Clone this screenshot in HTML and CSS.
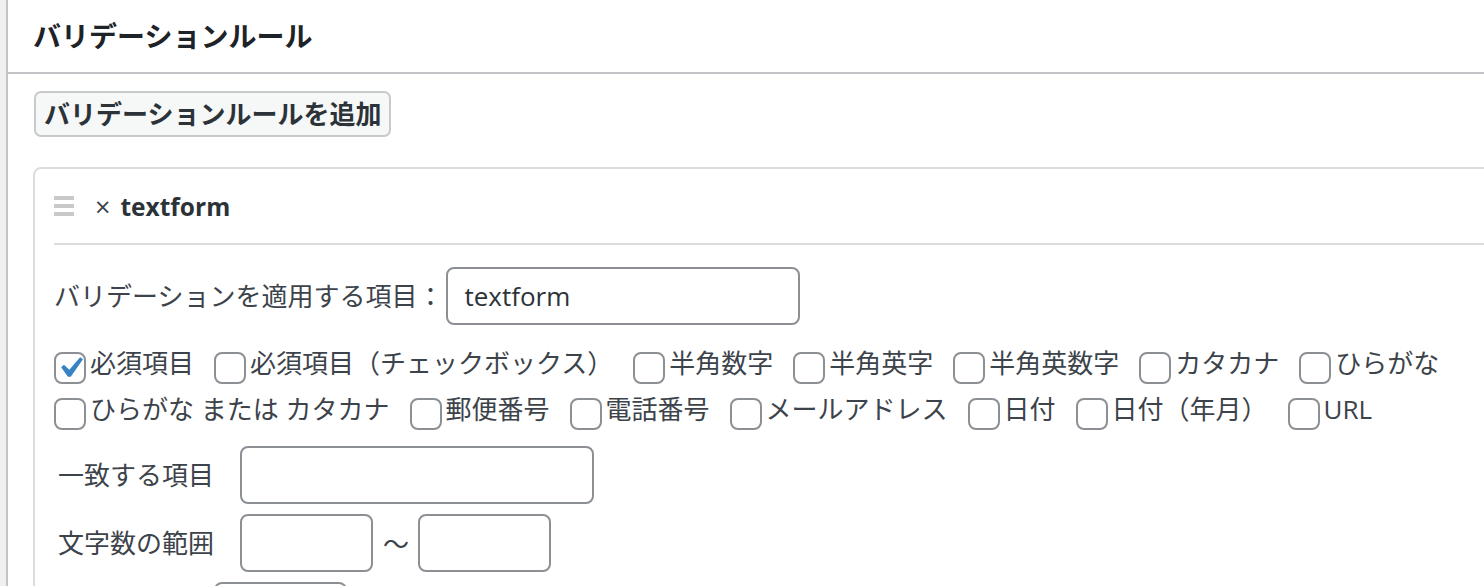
FILE: index.html
```html
<!DOCTYPE html>
<html lang="ja">
<head>
    <meta charset="UTF-8">
    <meta name="viewport" content="width=device-width, initial-scale=1.0">
    <title>バリデーションルール</title>
    <link rel="stylesheet" href="styles.css">
</head>
<body>

    <div class="screen">
        <div class="postbox">
            <h2 class="postbox-title">バリデーションルール</h2>

            <div class="inside">
                <button type="button" class="button">バリデーションルールを追加</button>

                <div class="rule">
                    <div class="rule-head">
                        <span class="handle"></span>
                        <span class="remove">×</span>
                        <span class="rule-name">textform</span>
                    </div>

                    <div class="rule-body">
                        <div class="target">
                            <label class="target-label">バリデーションを適用する項目：</label>
                            <input type="text" class="text target-input" value="textform">
                        </div>

                        <div class="checks">
                            <label class="check">
                                <span class="box checked">
                                    <svg viewBox="0 0 20 20" width="42" height="42"><path d="M14.83 4.89l1.34.94-5.81 8.38H9.02L5.78 9.67l1.34-1.25 2.57 2.4z"/></svg>
                                </span>
                                <span class="check-text">必須項目</span>
                            </label>
                            <label class="check"><span class="box"></span><span class="check-text">必須項目（チェックボックス）</span></label>
                            <label class="check"><span class="box"></span><span class="check-text">半角数字</span></label>
                            <label class="check"><span class="box"></span><span class="check-text">半角英字</span></label>
                            <label class="check"><span class="box"></span><span class="check-text">半角英数字</span></label>
                            <label class="check"><span class="box"></span><span class="check-text">カタカナ</span></label>
                            <label class="check"><span class="box"></span><span class="check-text">ひらがな</span></label>
                            <label class="check"><span class="box"></span><span class="check-text">ひらがな または カタカナ</span></label>
                            <label class="check"><span class="box"></span><span class="check-text">郵便番号</span></label>
                            <label class="check"><span class="box"></span><span class="check-text">電話番号</span></label>
                            <label class="check"><span class="box"></span><span class="check-text">メールアドレス</span></label>
                            <label class="check"><span class="box"></span><span class="check-text">日付</span></label>
                            <label class="check"><span class="box"></span><span class="check-text">日付（年月）</span></label>
                            <label class="check"><span class="box"></span><span class="check-text">URL</span></label>
                        </div>

                        <div class="field">
                            <span class="field-label">一致する項目</span>
                            <input type="text" class="text wide">
                        </div>
                        <div class="field">
                            <span class="field-label">文字数の範囲</span>
                            <input type="text" class="text short">
                            <span class="tilde">〜</span>
                            <input type="text" class="text short">
                        </div>
                        <div class="field">
                            <span class="field-label">最小文字数</span>
                            <input type="text" class="text short">
                        </div>
                    </div>
                </div>
            </div>
        </div>
    </div>

</body>
</html>
```

FILE: styles.css
```css
* {
    margin: 0;
    padding: 0;
    box-sizing: border-box;
}

html, body {
    height: 100%;
}

body {
    font-family: "Open Sans", "Noto Sans CJK JP", sans-serif;
    background: #f0f0f1;
    color: #3c434a;
    overflow: hidden;
}

.screen {
    height: 100%;
    padding-left: 6px;
}

.postbox {
    height: 100%;
    background: #fff;
    border-left: 2px solid #c3c4c7;
}

.postbox-title {
    height: 74px;
    padding: 0 25px;
    font-size: 28px;
    font-weight: 700;
    line-height: 72px;
    color: #1d2327;
    border-bottom: 2px solid #c3c4c7;
}

.inside {
    padding: 17px 0 0 25px;
}

/* Add rule button */
.button {
    display: block;
    height: 46px;
    padding: 0 8px;
    font-family: inherit;
    font-size: 26px;
    font-weight: 700;
    line-height: 42px;
    color: #2c3338;
    background: #f6f7f7;
    border: 2px solid #c8c9cc;
    border-radius: 7px;
    margin-left: 1px;
}

/* Rule box */
.rule {
    width: 1480px;
    margin-top: 30px;
    padding: 0 19px;
    border: 2px solid #dcdcde;
    border-radius: 8px;
}

.rule-head {
    display: flex;
    align-items: center;
    height: 76px;
    border-bottom: 2px solid #dcdcde;
}

.handle {
    width: 20px;
    height: 20px;
    margin-right: 21px;
    background: linear-gradient(#c9c9c9 0 4px, transparent 4px 8px, #c9c9c9 8px 12px, transparent 12px 16px, #c9c9c9 16px 20px);
}

.remove {
    font-size: 27px;
    line-height: 1;
    color: #3c434a;
    margin-right: 10px;
}

.rule-name {
    font-size: 24.5px;
    font-weight: 700;
    color: #2c3338;
}

.rule-body {
    padding: 22px 0 20px;
}

/* Text inputs */
.text {
    height: 58px;
    padding: 0 16px;
    font-family: inherit;
    font-size: 26px;
    color: #2c3338;
    background: #fff;
    border: 2px solid #8c8f94;
    border-radius: 8px;
}

.target {
    display: flex;
    align-items: center;
    gap: 3px;
}

.target-label {
    font-size: 26px;
    line-height: 32px;
}

.target-input {
    width: 354px;
}

/* Checkbox list */
.checks {
    display: flex;
    flex-wrap: wrap;
    column-gap: 20px;
    row-gap: 14px;
    margin-top: 27px;
}

.check {
    display: flex;
    align-items: flex-start;
    gap: 4px;
}

.box {
    position: relative;
    flex: none;
    width: 32px;
    height: 32px;
    border: 2px solid #8c8f94;
    border-radius: 8px;
    background: #fff;
}

.box svg {
    position: absolute;
    top: -7px;
    left: -7px;
    fill: #3582c4;
}

.check-text {
    font-size: 26px;
    line-height: 22px;
    white-space: nowrap;
}

/* Extra fields */
.field {
    display: flex;
    align-items: center;
    margin-top: 10px;
}

.checks + .field {
    margin-top: 16px;
}

.field-label {
    font-size: 26px;
    line-height: 32px;
    padding-left: 4px;
    margin-right: 26px;
}

.wide {
    width: 354px;
}

.short {
    width: 133px;
}

.tilde {
    font-size: 26px;
    margin: 0 9px 0 10px;
}
```
